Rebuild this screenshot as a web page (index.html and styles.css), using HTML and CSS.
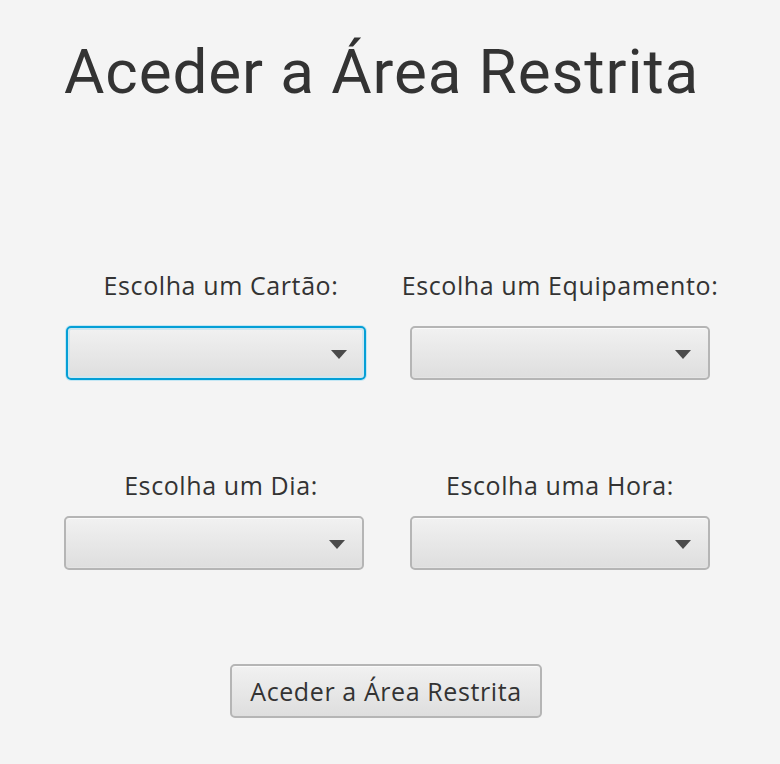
FILE: index.html
```html
<!DOCTYPE html>
<html lang="pt">
<head>
<meta charset="utf-8">
<link rel="stylesheet" href="styles.css">
<title>Aceder a Área Restrita</title>
</head>
<body>
<div class="page">
  <h1 class="title">Aceder a Área Restrita</h1>
  <div class="form">
    <div class="field field-left">
      <div class="label">Escolha um Cartão:</div>
      <div class="combo combo-focused"><span class="arrow"></span></div>
    </div>
    <div class="field field-right">
      <div class="label">Escolha um Equipamento:</div>
      <div class="combo"><span class="arrow"></span></div>
    </div>
    <div class="field field-left row2">
      <div class="label">Escolha um Dia:</div>
      <div class="combo"><span class="arrow"></span></div>
    </div>
    <div class="field field-right row2">
      <div class="label">Escolha uma Hora:</div>
      <div class="combo"><span class="arrow"></span></div>
    </div>
  </div>
  <div class="actions">
    <button class="btn">Aceder a Área Restrita</button>
  </div>
</div>
</body>
</html>
```

FILE: styles.css
```css
html, body {
  margin: 0;
  padding: 0;
  background: #f4f4f4;
}
body {
  width: 780px;
  height: 764px;
  overflow: hidden;
  font-family: "Open Sans", "Noto Sans", sans-serif;
  color: #333333;
}
.page {
  padding: 0 0 0 64px;
}
.title {
  margin: 0;
  padding-top: 36px;
  font-family: Roboto, "Noto Sans", sans-serif;
  font-size: 62px;
  font-weight: 400;
  line-height: 72px;
  color: #333333;
  letter-spacing: 0.9px;
}
.form {
  margin-top: 162px;
  display: grid;
  grid-template-columns: 300px 300px;
  column-gap: 46px;
  row-gap: 0;
}
.field {
  display: flex;
  flex-direction: column;
  align-items: stretch;
}
.row2 {
  margin-top: 90px;
}
.label {
  text-align: center;
  font-size: 25px;
  letter-spacing: 0.6px;
  line-height: 30px;
  height: 30px;
  margin-bottom: 26px;
  color: #333333;
  white-space: nowrap;
}
.row2 .label {
  margin-bottom: 16px;
}
.field-left .label {
  padding-left: 14px;
}
.field-right .label {
  margin-left: -20px;
  margin-right: -20px;
}
.combo {
  position: relative;
  box-sizing: border-box;
  height: 54px;
  border: 2px solid #b5b5b5;
  border-radius: 5px;
  background: linear-gradient(#f1f1f1, #dedede);
  box-shadow: inset 0 1px 0 #fafafa, inset 0 -1px 0 #e4e4e4;
}
.combo-focused {
  margin-left: 2px;
  margin-right: -2px;
  border: 2px solid #049fd6;
  box-shadow: 0 0 0 1px #c4e7f4, inset 0 0 0 2px #cfe6ef;
}
.arrow {
  position: absolute;
  right: 17px;
  top: 22px;
  width: 0;
  height: 0;
  border-left: 8px solid transparent;
  border-right: 8px solid transparent;
  border-top: 9px solid #4a4a4a;
}
.actions {
  margin-top: 94px;
  padding-left: 166px;
}
.btn {
  box-sizing: border-box;
  width: 312px;
  height: 54px;
  border: 2px solid #b5b5b5;
  border-radius: 5px;
  background: linear-gradient(#f1f1f1, #dedede);
  box-shadow: inset 0 1px 0 #fafafa;
  font-family: "Open Sans", "Noto Sans", sans-serif;
  font-size: 25px;
  letter-spacing: 0.6px;
  color: #333333;
  padding: 0;
}
```
